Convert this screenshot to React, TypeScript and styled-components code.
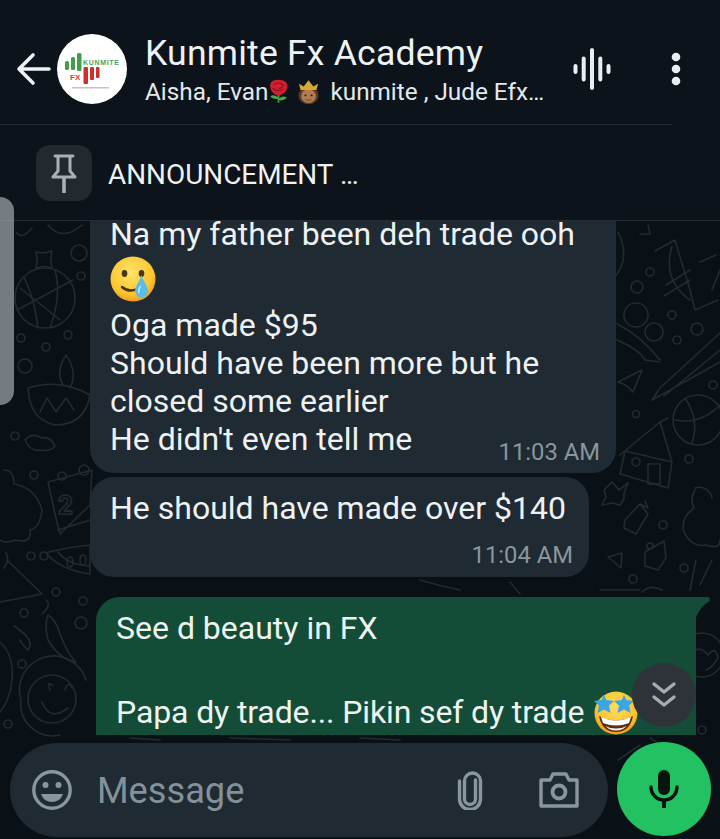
import React from "react";
import styled, { createGlobalStyle } from "styled-components";

const Global = createGlobalStyle`
  html, body { margin: 0; padding: 0; background: #0b1219; }
  * { box-sizing: border-box; }
  #root { width: 720px; height: 839px; overflow: hidden; }
`;

const Screen = styled.div`
  position: relative;
  width: 720px;
  height: 839px;
  display: flex;
  flex-direction: column;
  overflow: hidden;
  background: #0c131a;
  color: #eef2f4;
  font-family: Roboto, "Liberation Sans", sans-serif;
`;

const Header = styled.header`
  height: 124px;
  flex: none;
  display: flex;
  align-items: center;
  padding: 14px 0 0 16px;
`;

const Avatar = styled.div`
  width: 70px;
  height: 70px;
  flex: none;
  margin-left: 5px;
  border-radius: 50%;
  overflow: hidden;
  background: #fff;
`;

const Info = styled.div`
  width: 420px;
  margin-left: 18px;
  display: flex;
  flex-direction: column;
  gap: 1px;
`;

const Title = styled.div`
  font-size: 35.6px;
  line-height: 44px;
  letter-spacing: 0.2px;
  color: #eef2f4;
  white-space: nowrap;
`;

const Subtitle = styled.div`
  display: flex;
  align-items: center;
  font-size: 24.3px;
  line-height: 32px;
  color: #e3e8eb;
  white-space: nowrap;
`;

const SubtitleRest = styled.span`
  margin-left: 11px;
`;

const Actions = styled.div`
  display: flex;
  align-items: center;
  gap: 59px;
  margin-left: 8px;
`;

const Divider = styled.div`
  height: 1px;
  flex: none;
  margin-right: 48px;
  background: #20272d;
`;

const Pinned = styled.div`
  height: 96px;
  flex: none;
  display: flex;
  align-items: center;
  gap: 16px;
  padding-left: 36px;
  border-bottom: 1px solid #262d33;
`;

const PinTile = styled.div`
  width: 56px;
  height: 56px;
  border-radius: 14px;
  background: #22292f;
  display: flex;
  align-items: center;
  justify-content: center;
`;

const PinnedText = styled.div`
  font-size: 27.9px;
  margin-top: 3px;
  color: #eef2f4;
  white-space: nowrap;
`;

const Main = styled.main`
  position: relative;
  flex: 1;
  min-height: 0;
  display: flex;
  flex-direction: column;
  background: #0a1116;
`;

const DoodleLayer = styled.svg`
  position: absolute;
  inset: 0;
  width: 720px;
  height: 618px;
  fill: none;
  stroke: #232b30;
  stroke-width: 1.6;
  stroke-linejoin: round;
  stroke-linecap: round;
`;

const MessageList = styled.div`
  position: relative;
  flex: 1;
  min-height: 0;
  overflow: hidden;
  display: flex;
  flex-direction: column;
  justify-content: flex-end;
`;

const Incoming = styled.div<{ $width: number; $gap?: number }>`
  flex: none;
  width: ${(p) => p.$width}px;
  margin-left: 90px;
  margin-bottom: ${(p) => p.$gap ?? 0}px;
  padding: 12px 16px 0 20px;
  border-radius: 24px;
  background: #1f2a32;
  font-size: 32px;
  line-height: 38px;
  color: #eef2f4;
`;

const FirstBubble = styled(Incoming)`
  padding-top: 30px;
  padding-bottom: 15px;
`;

const SecondBubble = styled(Incoming)`
  padding-bottom: 7px;
`;

const TextLine = styled.div`
  white-space: nowrap;
`;

const EmojiLine = styled.div`
  height: 48px;
  margin: 2px 0 3px;
  display: flex;
  align-items: center;
`;

const LastRow = styled.div`
  display: flex;
  justify-content: space-between;
  align-items: flex-end;
`;

const Time = styled.span`
  font-size: 23.8px;
  line-height: 30px;
  color: #8a959c;
  white-space: nowrap;
  transform: translateY(9px);
`;

const TimeRow = styled.div`
  display: flex;
  justify-content: flex-end;
  height: 30px;
  margin-top: 13px;
`;

const PlainTime = styled(Time)`
  transform: none;
`;

const Outgoing = styled.div`
  position: relative;
  flex: none;
  width: 600px;
  margin-left: 96px;
  padding: 10px 0 2px 20px;
  border-radius: 24px 0 0 0;
  background: #144d37;
  font-size: 32px;
  line-height: 42px;
  color: #eef5f1;

  &::after {
    content: "";
    position: absolute;
    top: 0;
    left: 100%;
    width: 15px;
    height: 20px;
    background: #144d37;
    clip-path: path("M0 0 H11 Q15 0 13.5 4 Q5 9 0 20 Z");
  }
`;

const BlankLine = styled.div`
  height: 42px;
`;

const OutgoingRow = styled.div`
  height: 42px;
  display: flex;
  align-items: center;
  gap: 10px;
  letter-spacing: -0.12px;
  white-space: nowrap;
`;

const Composer = styled.div`
  position: relative;
  flex: none;
  display: flex;
  align-items: flex-start;
  gap: 9px;
  padding: 7px 9px 2px 10px;
`;

const Pill = styled.div`
  width: 598px;
  height: 94px;
  margin-top: 1px;
  padding: 0 29px 0 22px;
  border-radius: 47px;
  background: #1f2a32;
  display: flex;
  align-items: center;
`;

const Placeholder = styled.span`
  flex: 1;
  margin-left: 25px;
  font-size: 36.2px;
  color: #84919a;
`;

const PillIcons = styled.div`
  display: flex;
  align-items: center;
  gap: 55px;
`;

const MicButton = styled.div`
  width: 94px;
  height: 94px;
  flex: none;
  border-radius: 50%;
  background: #22c162;
  display: flex;
  align-items: center;
  justify-content: center;
`;

const ScrollButton = styled.div`
  position: absolute;
  left: 632px;
  top: 663px;
  width: 64px;
  height: 64px;
  border-radius: 50%;
  background: #2d3338;
  display: flex;
  align-items: center;
  justify-content: center;
`;

const ScrollHandle = styled.div`
  position: absolute;
  left: 0;
  top: 197px;
  width: 14px;
  height: 208px;
  border-radius: 0 14px 14px 0;
  background: rgba(160, 166, 170, 0.72);
`;

const InlineEmoji = styled.svg<{ $gap?: number }>`
  flex: none;
  margin-left: ${(p) => p.$gap ?? 0}px;
`;

const Arrow = () => (
  <svg width="36" height="34" viewBox="0 0 36 34" fill="none" stroke="#eef2f4" strokeWidth="3.6" strokeLinecap="round" strokeLinejoin="round">
    <path d="M17 3 L3 17 L17 31 M3 17 H33" />
  </svg>
);

const Logo = () => (
  <svg width="70" height="70" viewBox="0 0 70 70">
    <g fill="#3f9f4d">
      <rect x="8" y="27" width="4" height="9" rx="1.500" />
      <rect x="14" y="23" width="4" height="13" rx="1.500" />
      <rect x="20" y="19" width="4.500" height="18" rx="1.500" />
    </g>
    <text x="26" y="31" fontFamily="Liberation Sans, sans-serif" fontSize="7" fontWeight="700" fill="#4aa35a" textLength="36">KUNMITE</text>
    <text x="13" y="46" fontFamily="Liberation Sans, sans-serif" fontSize="8" fontWeight="700" fill="#d9423a">FX</text>
    <g fill="#cf2f2b">
      <rect x="26.500" y="33" width="4.500" height="17" rx="1" />
      <rect x="33" y="33" width="4" height="13" rx="1" />
      <rect x="39" y="33" width="3.500" height="11" rx="1" />
    </g>
    <rect x="15" y="53" width="37" height="1.500" fill="#d5bdbb" />
  </svg>
);

const Rose = () => (
  <InlineEmoji width="21" height="25" viewBox="0 0 28 38" preserveAspectRatio="none">
    <path d="M14 22 V36" stroke="#3c9a3e" strokeWidth="2.500" />
    <path d="M14 28 Q6 22 3 27 Q8 32 14 30 Z M14 30 Q22 24 25 29 Q20 34 14 32 Z" fill="#4aa544" />
    <path d="M14 1 C5 1 2 6 3 12 C4 20 9 24 14 25 C20 24 25 19 26 12 C27 6 22 1 14 1 Z" fill="#d21f2d" />
    <path d="M8 9 Q14 3 20 9 Q19 15 14 14 M6 14 Q11 20 20 16" stroke="#8f0f1d" strokeWidth="1.600" fill="none" />
  </InlineEmoji>
);

const Queen = () => (
  <InlineEmoji $gap={9} width="21" height="26" viewBox="0 0 24 38" preserveAspectRatio="none">
    <ellipse cx="12" cy="24" rx="11.500" ry="13" fill="#5b3a24" />
    <ellipse cx="12" cy="25" rx="8.500" ry="10" fill="#b07a52" />
    <circle cx="8.500" cy="24" r="1.200" fill="#2c1a10" />
    <circle cx="15.500" cy="24" r="1.200" fill="#2c1a10" />
    <path d="M8.500 30 Q12 32.500 15.500 30" stroke="#6d3d25" strokeWidth="1.200" fill="none" />
    <path d="M1 7 L6.500 11 L12 2 L17.500 11 L23 7 L21 16 H3 Z" fill="#d9a638" />
  </InlineEmoji>
);

const TearFace = () => (
  <svg width="46" height="46" viewBox="0 0 46 46">
    <defs>
      <radialGradient id="face1" cx="45%" cy="35%" r="70%">
        <stop offset="0%" stopColor="#ffe36a" />
        <stop offset="70%" stopColor="#fcc52e" />
        <stop offset="100%" stopColor="#ef8f1c" />
      </radialGradient>
    </defs>
    <circle cx="23" cy="23" r="22.500" fill="url(#face1)" />
    <ellipse cx="14.500" cy="17.500" rx="2.800" ry="3.400" fill="#4c3210" />
    <ellipse cx="31.500" cy="17.500" rx="2.800" ry="3.400" fill="#4c3210" />
    <path d="M12 31 Q19 37 27 33" stroke="#4c3210" strokeWidth="2.500" fill="none" strokeLinecap="round" />
    <path d="M31.500 19 C29 27 25 30 25 35 A6.500 6.500 0 0 0 38 35 C38 30 34 27 31.500 19 Z" fill="#59bde6" />
    <path d="M31 30 Q28 33 29 37" stroke="#bfeaf8" strokeWidth="1.500" fill="none" />
  </svg>
);

const StarFace = () => (
  <svg width="44" height="46" viewBox="0 0 44 46">
    <defs>
      <radialGradient id="face2" cx="50%" cy="35%" r="70%">
        <stop offset="0%" stopColor="#ffdf5e" />
        <stop offset="70%" stopColor="#fbbf2c" />
        <stop offset="100%" stopColor="#ee8a1c" />
      </radialGradient>
    </defs>
    <circle cx="22" cy="24" r="21.500" fill="url(#face2)" />
    <path d="M5 27 Q22 36 39 27 Q36 43 22 43 Q8 43 5 27 Z" fill="#5b2f10" />
    <path d="M7 28 Q22 35 37 28 L35 34 Q22 39 9 34 Z" fill="#fff" />
    <path d="M11 37 Q22 42 33 37 L29 40 Q22 43 15 40 Z" fill="#f4f0e8" />
    <g fill="#3ba5e6">
      <path d="M10 6 L12.500 11 L20 12 L15 16.500 L16.500 24 L10 20.500 L3.500 24 L5 16.500 L0 12 L7.500 11 Z" />
      <path d="M30 6 L32.500 11 L40 12 L35 16.500 L36.500 24 L30 20.500 L23.500 24 L25 16.500 L20 12 L27.500 11 Z" />
    </g>
  </svg>
);

const Wave = () => (
  <svg width="38" height="42" viewBox="0 0 38 42" stroke="#e9eef2" strokeLinecap="round" strokeWidth="4">
    <path d="M2.500 18 V24 M10.700 10.500 V31.500 M19 2 V40 M27.300 10.500 V31.500 M35.500 18 V24" />
  </svg>
);

const Dots = () => (
  <svg width="12" height="36" viewBox="0 0 12 36" fill="#e9eef2">
    <circle cx="6" cy="6" r="4.300" />
    <circle cx="6" cy="18" r="4.300" />
    <circle cx="6" cy="30" r="4.300" />
  </svg>
);

const PinIcon = () => (
  <svg width="26" height="40" viewBox="0 0 26 40" fill="none" stroke="#a9b1b7" strokeWidth="3" strokeLinejoin="round" strokeLinecap="round">
    <path d="M4 3 H22 M7 3 V18 L2 24 H24 L19 18 V3" />
    <path d="M13 25 V39" strokeWidth="3.600" />
  </svg>
);

const Smile = () => (
  <svg width="40" height="40" viewBox="0 0 40 40">
    <circle cx="20" cy="20" r="18.200" fill="none" stroke="#8a969e" strokeWidth="3.400" />
    <circle cx="13.500" cy="15" r="3" fill="#8a969e" />
    <circle cx="26.500" cy="15" r="3" fill="#8a969e" />
    <path d="M9 24 H31 Q28 32 20 32 Q12 32 9 24 Z" fill="#8a969e" />
  </svg>
);

const Clip = () => (
  <svg width="28" height="40" viewBox="0 0 28 40" fill="none" stroke="#8a969e" strokeWidth="3.400" strokeLinecap="round">
    <path d="M19 9 V28 A5.500 5.500 0 0 1 8 28 V10 A8 8 0 0 1 24 10 V28 A10.500 10.500 0 0 1 3 28 V10" transform="translate(0.500 1)" />
  </svg>
);

const Camera = () => (
  <svg width="40" height="36" viewBox="0 0 40 36" fill="none" stroke="#8a969e" strokeWidth="3.400" strokeLinejoin="round">
    <path d="M2 8 H11 L14 2 H27 L30 8 H38 V34 H2 Z" />
    <circle cx="20" cy="20" r="6.500" strokeWidth="3.800" />
  </svg>
);

const Mic = () => (
  <svg width="30" height="38" viewBox="0 0 30 38" fill="none">
    <rect x="9" y="0" width="12" height="25" rx="6" fill="#07150e" />
    <path d="M2 17 A13 13 0 0 0 28 17" stroke="#07150e" strokeWidth="3.400" strokeLinecap="round" />
    <rect x="13" y="29" width="4" height="9" fill="#07150e" />
  </svg>
);

const Chevrons = () => (
  <svg width="26" height="28" viewBox="0 0 26 28" fill="none" stroke="#a6adb2" strokeWidth="3.400" strokeLinecap="round" strokeLinejoin="round">
    <path d="M3 3 L13 11 L23 3 M3 16 L13 24 L23 16" />
  </svg>
);

const Doodles = () => (
  <DoodleLayer viewBox="0 221 720 618">
    <circle cx="45" cy="298" r="30" />
    <path d="M17 310 Q45 295 73 280 M24 277 Q35 300 38 328 M55 270 Q62 295 50 328 M20 288 L60 320" />
    <path d="M36 252 Q44 254 52 251 Q50 260 52 268 Q44 265 36 268 Q38 260 36 252 Z" />
    <circle cx="79" cy="253" r="8" />
    <circle cx="81" cy="276" r="4" />
    <circle cx="21" cy="338" r="4" />
    <circle cx="46" cy="347" r="4" />
    <circle cx="68" cy="335" r="4" />
    <circle cx="25" cy="366" r="7" />
    <path d="M28 388 Q60 378 90 395 Q85 425 55 425 Q30 420 28 388 Z M63 385 Q55 372 66 355 Q78 372 70 388" />
    <path d="M40 412 L47 398 L56 412 L66 398 L74 410" />
    <path d="M25 440 Q32 432 42 438 Q50 436 55 446 Q50 452 40 450 Q30 452 25 440 Z" />
    <circle cx="15" cy="436" r="4" />
    <path d="M16 232 Q22 240 32 228 M48 225 Q62 242 82 225" />
    <path d="M48 482 L92 470 L90 505 L60 534 Q55 515 48 482 Z M58 530 L90 520" />
    <circle cx="62" cy="476" r="4" />
    <circle cx="84" cy="470" r="5" />
    <text x="58" y="514" fontFamily="Roboto, sans-serif" fontSize="26" fontWeight="700">2</text>
    <path d="M4 470 Q14 470 14 484 Q36 488 42 510 Q40 528 30 530 Q32 544 16 540 Q4 544 0 540" />
    <circle cx="34" cy="475" r="4" />
    <circle cx="44" cy="556" r="4" />
    <circle cx="31" cy="556" r="4" />
    <path d="M46 553 Q60 570 90 574 L90 545 Q62 548 46 553 Z M58 552 Q68 565 90 566" />
    <ellipse cx="70" cy="562" rx="3" ry="5" />
    <ellipse cx="83" cy="560" rx="3" ry="5" />
    <path d="M8 561 L42 594 L0 602 M6 553 Q10 560 4 568" />
    <circle cx="56" cy="592" r="4" />
    <circle cx="83" cy="601" r="4" />
    <circle cx="24" cy="613" r="4" />
    <circle cx="81" cy="623" r="6" />
    <path d="M48 615 Q56 620 60 634 Q68 655 76 662 Q60 660 48 640 Q44 625 48 615 Z M14 626 Q36 640 28 650 Q22 645 20 640 M42 614 Q52 605 46 600" />
    <circle cx="22" cy="664" r="4" />
    <path d="M0 642 Q14 655 12 680 Q10 700 0 712" />
    <circle cx="52" cy="699" r="24" />
    <path d="M21 700 A32 32 0 0 1 86 680 M21 700 A32 32 0 0 0 60 735" />
    <path d="M42 702 Q50 722 68 708 M50 690 Q46 680 53 686 M65 690 Q68 680 72 688" />
    <circle cx="8" cy="724" r="4" />
    <path d="M618 232 Q632 260 612 280" />
    <path d="M648 225 L650 234 H640 M655 251 L675 240 L690 290 L695 310 L718 300 M672 246 Q662 280 690 300" />
    <path d="M700 262 L716 255 M712 290 L720 270 M666 285 L690 270 M664 296 L690 280" />
    <circle cx="650" cy="272" r="4" />
    <circle cx="637" cy="287" r="6" />
    <circle cx="672" cy="315" r="4" />
    <circle cx="697" cy="329" r="6" />
    <circle cx="677" cy="340" r="4" />
    <circle cx="636" cy="315" r="12" />
    <circle cx="654" cy="332" r="9" />
    <path d="M617 324 Q640 335 660 360 M617 340 Q640 350 645 360 L660 362" />
    <path d="M618 382 L642 370 L633 392 Q626 384 618 382 Z" />
    <path d="M660 388 L720 333 M664 396 L720 350 M652 400 L720 362 M652 400 L660 388" />
    <circle cx="713" cy="385" r="4" />
    <circle cx="636" cy="414" r="3.500" />
    <circle cx="698" cy="420" r="25" />
    <path d="M675 420 Q700 425 720 405 M685 398 Q700 420 692 443" />
    <path d="M620 455 L660 422 L668 418 M625 451 L672 462 L668 488 L620 474 Z M660 422 L672 462" />
    <circle cx="636" cy="462" r="4" />
    <rect x="648" y="464" width="12" height="20" />
    <circle cx="689" cy="459" r="4" />
    <path d="M604 490 L612 482 L619 490 L628 483 L624 493 L624 499 L620 505 L612 503 L602 505 L606 497 Z" />
    <path d="M625 520 L640 504 L648 514 L636 534 L624 528 Z M640 504 L648 508 L645 501" />
    <circle cx="663" cy="525" r="4" />
    <path d="M645 552 L664 541 L666 558 L658 570 L645 566 Z" />
    <circle cx="650" cy="546" r="3" />
    <circle cx="684" cy="568" r="4" />
    <circle cx="633" cy="579" r="4" />
    <path d="M608 557 L622 553 L621 568 Z" />
    <path d="M695 488 A13 13 0 0 1 712 498 M694 508 A18 18 0 0 1 695 490 M694 508 Q680 518 684 532 Q692 548 706 545 Q720 550 720 540" />
    <path d="M696 560 L690 590 M700 585 L712 560" />
    <path d="M642 592 Q650 584 662 590" />
    <circle cx="702" cy="655" r="22" />
    <path d="M692 652 Q700 645 708 655 Q716 645 718 658 Q712 668 706 670" />
    <circle cx="702" cy="730" r="4" />
    <path d="M420 580 Q440 586 460 590 M510 582 L520 594 M600 590 L640 590" />
    <path d="M130 738 L160 740 M230 738 L290 740 M360 738 L400 740 M650 738 L700 770 M618 760 L640 745" />
  </DoodleLayer>
);

export default function App() {
  return (
    <Screen>
      <Global />
      <Header>
        <Arrow />
        <Avatar><Logo /></Avatar>
        <Info>
          <Title>Kunmite Fx Academy</Title>
          <Subtitle>
            Aisha, Evan
            <Rose />
            <Queen />
            <SubtitleRest>kunmite , Jude Efx…</SubtitleRest>
          </Subtitle>
        </Info>
        <Actions>
          <Wave />
          <Dots />
        </Actions>
      </Header>
      <Divider />
      <Pinned>
        <PinTile><PinIcon /></PinTile>
        <PinnedText>ANNOUNCEMENT …</PinnedText>
      </Pinned>
      <Main>
        <Doodles />
        <MessageList>
          <FirstBubble $width={526} $gap={4}>
            <TextLine>Na my father been deh trade ooh</TextLine>
            <EmojiLine><TearFace /></EmojiLine>
            <TextLine>Oga made $95</TextLine>
            <TextLine>Should have been more but he</TextLine>
            <TextLine>closed some earlier</TextLine>
            <LastRow>
              <TextLine>He didn't even tell me</TextLine>
              <Time>11:03 AM</Time>
            </LastRow>
          </FirstBubble>
          <SecondBubble $width={499} $gap={20}>
            <TextLine>He should have made over $140</TextLine>
            <TimeRow><PlainTime>11:04 AM</PlainTime></TimeRow>
          </SecondBubble>
          <Outgoing>
            <TextLine>See d beauty in FX</TextLine>
            <BlankLine />
            <OutgoingRow>
              Papa dy trade... Pikin sef dy trade
              <StarFace />
            </OutgoingRow>
          </Outgoing>
        </MessageList>
        <Composer>
          <Pill>
            <Smile />
            <Placeholder>Message</Placeholder>
            <PillIcons>
              <Clip />
              <Camera />
            </PillIcons>
          </Pill>
          <MicButton><Mic /></MicButton>
        </Composer>
      </Main>
      <ScrollButton><Chevrons /></ScrollButton>
      <ScrollHandle />
    </Screen>
  );
}
